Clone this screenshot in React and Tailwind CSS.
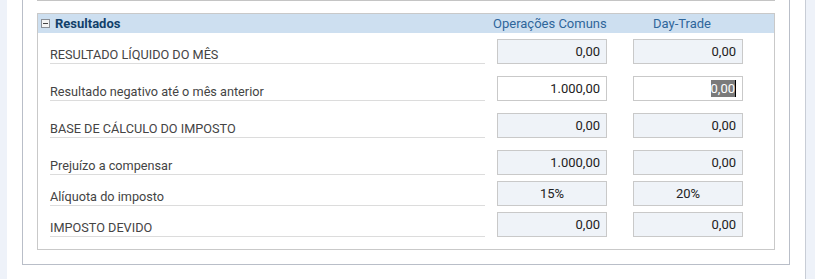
import React from "react";

const rows = [
    { label: "RESULTADO LÍQUIDO DO MÊS", comum: "0,00", day: "0,00", pt: "pt-[6px]" },
    { label: "Resultado negativo até o mês anterior", comum: "1.000,00", day: "0,00", pt: "pt-[12px]", editable: true },
    { label: "BASE DE CÁLCULO DO IMPOSTO", comum: "0,00", day: "0,00", pt: "pt-[12px]" },
    { label: "Prejuízo a compensar", comum: "1.000,00", day: "0,00", pt: "pt-[12px]" },
    { label: "Alíquota do imposto", comum: "15%", day: "20%", pt: "pt-[6px]", center: true },
    { label: "IMPOSTO DEVIDO", comum: "0,00", day: "0,00", pt: "pt-[6px]" },
];

const Field = ({ value, editable, center, selected }) => (
    <div
        className={`w-[110px] h-[25px] border border-[#c9c9c9] flex items-center px-[6px] text-[13px] text-[#222] ${
            editable ? "bg-white" : "bg-[#eff3f8]"
        } ${center ? "justify-center" : "justify-end"}`}
    >
        {selected ? (
            <>
                <span className="bg-[#7a7a7a] text-white leading-[17px]">{value}</span>
                <span className="w-px h-[17px] bg-black" />
            </>
        ) : (
            value
        )}
    </div>
);

const App = () => {
    return (
        <div className="flex h-[279px] bg-white font-['Roboto',sans-serif]">
            <div className="w-[7px] bg-[#eef2f9]" />
            <div className="flex-1 px-[15px]">
                <div className="border-x border-b border-[#b9bec8] px-[14px] pb-[14px]">
                    <div className="h-px bg-[#c4c4c4]" />
                    <div className="mt-[12px] border border-[#c9c9c9] pb-[12px]">
                        <div className="h-[19px] bg-[#cddff0] flex items-center text-[13px] whitespace-nowrap">
                            <div className="w-[447px] flex items-center pl-[3px]">
                                <span className="w-[9px] h-[9px] border border-[#8a8f96] bg-[#f4f4f4] flex items-center justify-center">
                                    <span className="w-[5px] h-px bg-[#444]" />
                                </span>
                                <span className="ml-[5px] font-bold text-[#123f6a]">Resultados</span>
                            </div>
                            <div className="w-[110px] ml-[8px] text-center text-[#2f669b]">Operações Comuns</div>
                            <div className="w-[110px] ml-[24px] text-center text-[#2f669b]">Day-Trade</div>
                        </div>
                        {rows.map((r, i) => (
                            <div key={i} className={`flex items-end pl-[12px] ${r.pt}`}>
                                <div className="w-[435px] border-b border-[#dcdcdc] text-[12.7px] text-[#444] leading-[17px]">
                                    {r.label}
                                </div>
                                <div className="ml-[12px]">
                                    <Field value={r.comum} editable={r.editable} center={r.center} />
                                </div>
                                <div className="ml-[26px]">
                                    <Field value={r.day} editable={r.editable} center={r.center} selected={r.editable} />
                                </div>
                            </div>
                        ))}
                    </div>
                </div>
            </div>
            <div className="w-[10px] border-l border-[#c8cdd6] bg-[#eef2f9]" />
        </div>
    );
};

export default App;
